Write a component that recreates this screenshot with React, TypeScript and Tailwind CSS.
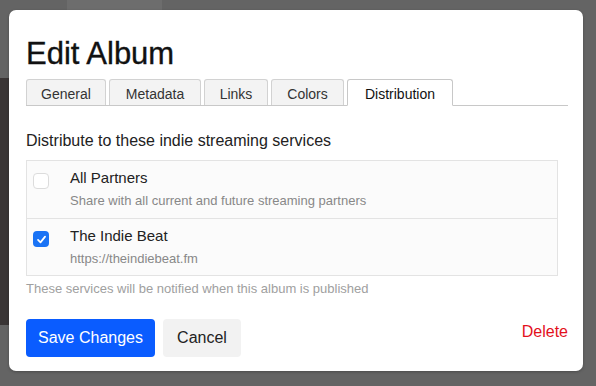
import React from "react";

const tabs = [
  { label: "General", w: "w-[80px]" },
  { label: "Metadata", w: "w-[92px]" },
  { label: "Links", w: "w-[64px]" },
  { label: "Colors", w: "w-[73px]" },
  { label: "Distribution", w: "w-[106px]" },
];

const services = [
  { name: "All Partners", sub: "Share with all current and future streaming partners", checked: false },
  { name: "The Indie Beat", sub: "https://theindiebeat.fm", checked: true },
];

function Checkbox({ checked }: { checked: boolean }) {
  if (checked) {
    return (
      <span className="w-[16px] h-[16px] rounded-[4px] bg-[#1a73f5] flex items-center justify-center">
        <svg width="11" height="11" viewBox="0 0 12 12" fill="none">
          <path d="M2.2 6.4 L4.9 9.1 L9.9 2.9" stroke="white" strokeWidth="1.9" strokeLinecap="round" strokeLinejoin="round" />
        </svg>
      </span>
    );
  }
  return <span className="block w-[16px] h-[16px] rounded-[4px] bg-white border border-[#dcdcdc]" />;
}

export default function App() {
  return (
    <div
      className="relative w-[596px] h-[386px] bg-[#646464] overflow-hidden pl-[9px] pt-[10px]"
      style={{ fontFamily: '"Liberation Sans", Arial, sans-serif' }}
    >
      {/* page behind the overlay */}
      <div className="absolute left-0 top-[78px] w-[9px] h-[247px] bg-[#3a3535]" />
      <div className="absolute left-[67px] top-0 w-[95px] h-[10px] bg-[#6d6d6d]" />

      <div className="relative w-[574px] h-[361px] bg-white rounded-[7px] shadow-[0_1px_3px_rgba(0,0,0,0.25)] pl-[17px] pr-[15px] pt-[26px] flex flex-col">
        <h1 className="text-[31px] leading-[36px] text-[#111] [-webkit-text-stroke:0.35px_#111]">Edit Album</h1>

        <div className="flex gap-[3px] border-b border-[#c8c8c8] mt-[7px] h-[27px] items-end">
          {tabs.map((t) => {
            const active = t.label === "Distribution";
            return (
              <div
                key={t.label}
                className={
                  active
                    ? `${t.w} h-[27px] -mb-px bg-white border border-[#c8c8c8] border-b-white rounded-t-[3px] text-[14px] text-[#111] flex items-center justify-center pt-[3px]`
                    : `${t.w} h-[26px] bg-[#f3f3f3] border border-b-0 border-[#d2d2d2] rounded-t-[3px] text-[14px] text-[#333] flex items-center justify-center pt-[3px]`
                }
              >
                {t.label}
              </div>
            );
          })}
        </div>

        <p className="text-[16px] text-[#222] mt-[25px] leading-[20px]">Distribute to these indie streaming services</p>

        <div className="mt-[9px] w-[532px] border border-[#e3e3e3] bg-[#fbfbfb]">
          {services.map((s, i) => (
            <div
              key={s.name}
              className={
                i === 0
                  ? "h-[57px] flex items-start pl-[6px] pt-[8px]"
                  : "h-[57px] flex items-start pl-[6px] pt-[8px] border-t border-[#e3e3e3]"
              }
            >
              <div className="pt-[4px]">
                <Checkbox checked={s.checked} />
              </div>
              <div className="ml-[21px]">
                <div className="text-[15px] leading-[18px] text-[#222]">{s.name}</div>
                <div className="text-[13px] leading-[16px] text-[#888] mt-[6px]">{s.sub}</div>
              </div>
            </div>
          ))}
        </div>

        <p className="text-[13px] text-[#a0a0a0] mt-[5px] leading-[16px]">These services will be notified when this album is published</p>

        <div className="flex items-center mt-[22px]">
          <button className="h-[38px] w-[129px] bg-[#0a5cff] rounded-[4px] text-white text-[16px]">Save Changes</button>
          <button className="h-[38px] w-[78px] ml-[8px] bg-[#f2f2f2] rounded-[4px] text-[#222] text-[16px]">Cancel</button>
          <span className="ml-auto text-[16px] text-[#e3101c] -mt-[12px]">Delete</span>
        </div>
      </div>
    </div>
  );
}
